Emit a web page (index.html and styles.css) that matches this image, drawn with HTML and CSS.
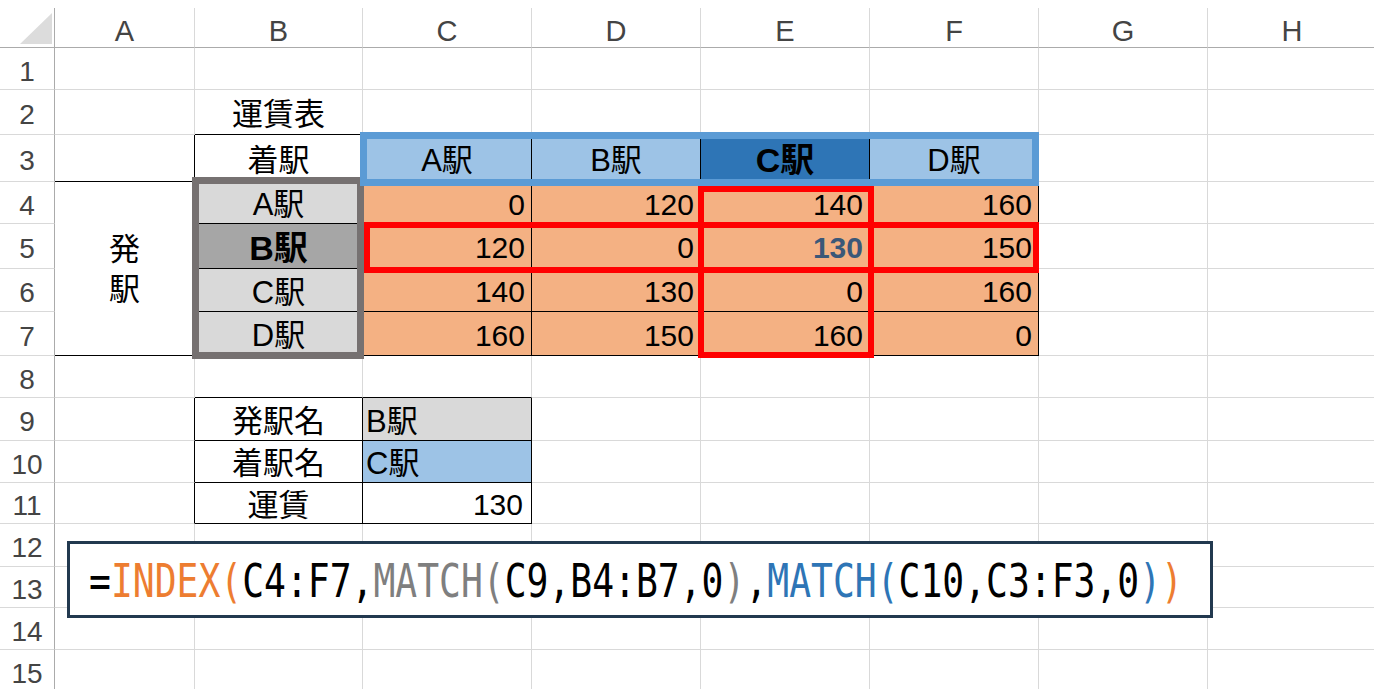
FILE: index.html
```html
<!DOCTYPE html>
<html lang="ja">
<head>
<meta charset="utf-8">
<title>運賃表</title>
<link rel="stylesheet" href="styles.css">
</head>
<body>
<div class="sheet">
  <div class="corner"><svg width="55" height="40" viewBox="0 0 55 40"><polygon points="20,36 52,36 52,5" fill="#dcdcdc"/></svg></div>
  <div class="ch">A</div><div class="ch">B</div><div class="ch">C</div><div class="ch">D</div><div class="ch">E</div><div class="ch">F</div><div class="ch">G</div><div class="ch">H</div>

  <div class="rh">1</div>
  <div class="c"></div><div class="c"></div><div class="c"></div><div class="c"></div><div class="c"></div><div class="c"></div><div class="c"></div><div class="c"></div>

  <div class="rh">2</div>
  <div class="c"></div><div class="c ctr bb">運賃表</div><div class="c"></div><div class="c"></div><div class="c"></div><div class="c"></div><div class="c"></div><div class="c"></div>

  <div class="rh">3</div>
  <div class="c br bb"></div><div class="c ctr">着駅</div><div class="c hdr br">A駅</div><div class="c hdr br">B駅</div><div class="c hdr sel br">C駅</div><div class="c hdr br">D駅</div><div class="c"></div><div class="c"></div>

  <div class="rh">4</div>
  <div class="c merged bb">発<br>駅</div><div class="c gray ctr bb">A駅</div><div class="c num">0</div><div class="c num">120</div><div class="c num">140</div><div class="c num">160</div><div class="c"></div><div class="c"></div>

  <div class="rh">5</div>
  <div class="c dgray ctr bb">B駅</div><div class="c num">120</div><div class="c num">0</div><div class="c num hit">130</div><div class="c num">150</div><div class="c"></div><div class="c"></div>

  <div class="rh">6</div>
  <div class="c gray ctr bb">C駅</div><div class="c num">140</div><div class="c num">130</div><div class="c num">0</div><div class="c num">160</div><div class="c"></div><div class="c"></div>

  <div class="rh">7</div>
  <div class="c gray ctr bb">D駅</div><div class="c num">160</div><div class="c num">150</div><div class="c num">160</div><div class="c num">0</div><div class="c"></div><div class="c"></div>

  <div class="rh">8</div>
  <div class="c"></div><div class="c bb"></div><div class="c bb"></div><div class="c"></div><div class="c"></div><div class="c"></div><div class="c"></div><div class="c"></div>

  <div class="rh">9</div>
  <div class="c br"></div><div class="c ctr bb br">発駅名</div><div class="c left gray bb br">B駅</div><div class="c"></div><div class="c"></div><div class="c"></div><div class="c"></div><div class="c"></div>

  <div class="rh">10</div>
  <div class="c br"></div><div class="c ctr bb br">着駅名</div><div class="c left blue bb br">C駅</div><div class="c"></div><div class="c"></div><div class="c"></div><div class="c"></div><div class="c"></div>

  <div class="rh">11</div>
  <div class="c br"></div><div class="c ctr bb br">運賃</div><div class="c right bb br">130</div><div class="c"></div><div class="c"></div><div class="c"></div><div class="c"></div><div class="c"></div>

  <div class="rh">12</div>
  <div class="c"></div><div class="c"></div><div class="c"></div><div class="c"></div><div class="c"></div><div class="c"></div><div class="c"></div><div class="c"></div>

  <div class="rh">13</div>
  <div class="c"></div><div class="c"></div><div class="c"></div><div class="c"></div><div class="c"></div><div class="c"></div><div class="c"></div><div class="c"></div>

  <div class="rh">14</div>
  <div class="c"></div><div class="c"></div><div class="c"></div><div class="c"></div><div class="c"></div><div class="c"></div><div class="c"></div><div class="c"></div>

  <div class="rh">15</div>
  <div class="c"></div><div class="c"></div><div class="c"></div><div class="c"></div><div class="c"></div><div class="c"></div><div class="c"></div><div class="c"></div>

  <div class="box-gray"></div>
  <div class="box-blue"></div>
  <div class="box-red-row"></div>
  <div class="box-red-col"></div>
  <div class="formula"><span class="ftext"><span class="k">=</span><span class="o">INDEX(</span>C4:F7,<span class="g">MATCH(</span>C9,B4:B7,0<span class="g">)</span>,<span class="b">MATCH(</span>C10,C3:F3,0<span class="b">)</span><span class="o">)</span></span></div>
</div>
</body>
</html>
```

FILE: styles.css
```css
html, body {
  margin: 0;
  padding: 0;
  background: #ffffff;
  overflow: hidden;
}

body {
  font-family: "Liberation Sans", "Noto Sans CJK JP", sans-serif;
  color: #000;
}

.sheet {
  position: relative;
  display: grid;
  grid-template-columns: 55px 140px 168px repeat(6, 169px);
  grid-template-rows: 48px 42px 45px 47px 42px 45px 43px 44px 42px 43px 42px 41px 43px 41px 42px 42px;
  width: 1377px;
}

.corner {
  margin-top: 8px;
  border-right: 1px solid #ababab;
  border-bottom: 1px solid #ababab;
  box-sizing: border-box;
}

.corner svg {
  display: block;
}

.ch {
  margin-top: 8px;
  box-sizing: border-box;
  border-right: 1px solid #d9d9d9;
  border-bottom: 1px solid #ababab;
  display: flex;
  align-items: center;
  justify-content: center;
  padding-top: 7px;
  font-size: 29px;
  line-height: 1;
  color: #444;
}

.rh {
  box-sizing: border-box;
  border-right: 1px solid #ababab;
  border-bottom: 1px solid #d9d9d9;
  display: flex;
  align-items: center;
  justify-content: center;
  padding-top: 6px;
  font-size: 28px;
  line-height: 1;
  color: #444;
}

.c {
  box-sizing: border-box;
  border-right: 1px solid #d9d9d9;
  border-bottom: 1px solid #d9d9d9;
  display: flex;
  align-items: center;
  padding-top: 4px;
  font-size: 31px;
  line-height: 1;
  white-space: nowrap;
}

.bb { border-bottom-color: #000; }
.br { border-right-color: #000; }

.ctr { justify-content: center; }
.left { justify-content: flex-start; padding-left: 3px; }
.right { justify-content: flex-end; padding-right: 8px; font-size: 30px; }

.hdr {
  background: #9dc3e6;
  justify-content: center;
}

.hdr.sel {
  background: #2e75b6;
  font-weight: bold;
  font-size: 34px;
}

.merged {
  grid-row: span 4;
  flex-direction: column;
  justify-content: center;
  align-items: center;
  line-height: 40px;
  padding-top: 2px;
}

.gray { background: #d9d9d9; }
.blue { background: #9dc3e6; }

.dgray {
  background: #a6a6a6;
  font-weight: bold;
  font-size: 34px;
}

.num {
  background: #f4b183;
  justify-content: flex-end;
  padding-right: 6px;
  font-size: 30px;
  border-right-color: #000;
  border-bottom-color: #000;
}

.num.hit {
  color: #3b5878;
  font-weight: bold;
}

/* overlay outlines drawn over the cells */
.box-gray {
  position: absolute;
  grid-column: 3 / 4;
  grid-row: 5 / 9;
  inset: -5px -1px -3px -3px;
  border: 7px solid #767171;
}

.box-blue {
  position: absolute;
  grid-column: 4 / 8;
  grid-row: 4 / 5;
  inset: -3px 0 -4px -3px;
  border: 7px solid #5b9bd5;
}

.box-red-row {
  position: absolute;
  grid-column: 4 / 8;
  grid-row: 6 / 7;
  inset: -2px 0 -4px 1px;
  border: 6px solid #ff0000;
}

.box-red-col {
  position: absolute;
  grid-column: 6 / 7;
  grid-row: 5 / 9;
  inset: 4px -4px -2px -3px;
  border: 6px solid #ff0000;
}

.formula {
  position: absolute;
  grid-column: 2 / 9;
  grid-row: 13 / 16;
  inset: 17px -5px 32px 12px;
  border: 3px solid #22394f;
  background: #fff;
  display: flex;
  align-items: center;
  padding-left: 19px;
  padding-top: 2px;
  overflow: hidden;
}

.ftext {
  display: inline-block;
  font-family: "DejaVu Sans Mono", monospace;
  font-size: 46px;
  line-height: 1;
  white-space: nowrap;
  transform: scaleX(0.79);
  transform-origin: left center;
  color: #000;
}

.k { color: #000; }
.o { color: #ed7d31; }
.g { color: #7f7f7f; }
.b { color: #2e75b6; }
```
